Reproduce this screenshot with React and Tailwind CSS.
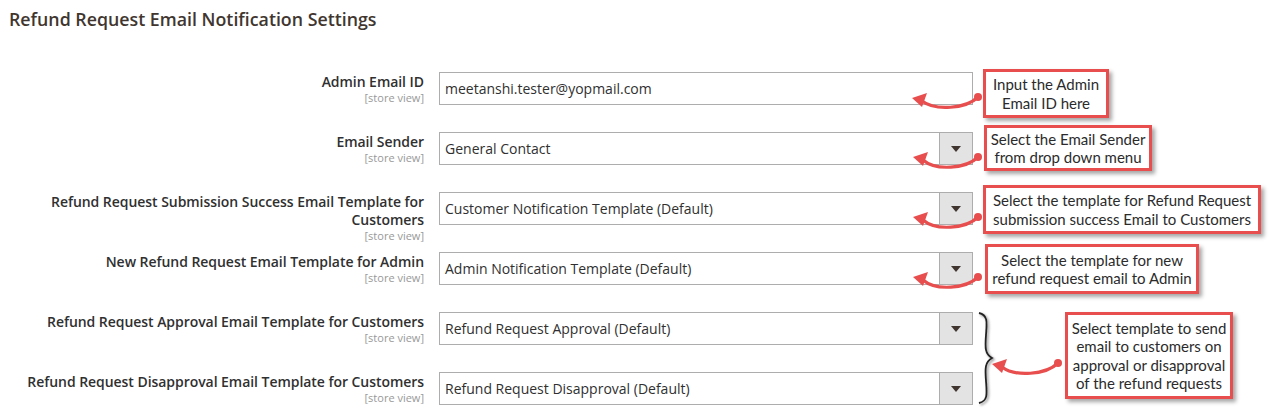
import React from "react";

const rows = [
  { label: ["Admin Email ID"], value: "meetanshi.tester@yopmail.com", select: false },
  { label: ["Email Sender"], value: "General Contact", select: true },
  { label: ["Refund Request Submission Success Email Template for", "Customers"], value: "Customer Notification Template (Default)", select: true },
  { label: ["New Refund Request Email Template for Admin"], value: "Admin Notification Template (Default)", select: true },
  { label: ["Refund Request Approval Email Template for Customers"], value: "Refund Request Approval (Default)", select: true },
  { label: ["Refund Request Disapproval Email Template for Customers"], value: "Refund Request Disapproval (Default)", select: true },
];

function Row({ r }) {
  return (
    <div className="flex h-[60px]">
      <div className="w-[424px] text-right pt-px">
        {r.label.map((l, i) => (
          <div key={i} className="text-[14px] leading-[18px] font-semibold text-[#303030] tracking-[-0.05px]">{l}</div>
        ))}
        <div className="text-[11px] leading-[14px] text-[#999]">[store view]</div>
      </div>
      <div className="ml-[15px] w-[534px] h-[33px] border border-[#adadad] bg-white flex items-center">
        <div className="flex-1 pl-[5px] text-[14px] text-[#303030]">{r.value}</div>
        {r.select && (
          <div className="w-[33px] h-full bg-[#e3e3e3] border-l border-[#adadad] flex items-center justify-center">
            <div className="w-0 h-0 border-l-[5px] border-r-[5px] border-t-[6px] border-l-transparent border-r-transparent border-t-[#41362f]" />
          </div>
        )}
      </div>
    </div>
  );
}

const notes = [
  { cls: "left-[983px] top-[69px] w-[126px] h-[49px]", lines: ["Input the Admin", "Email ID here"] },
  { cls: "left-[984px] top-[125px] w-[168px] h-[46px]", lines: ["Select the Email Sender", "from drop down menu"] },
  { cls: "left-[983px] top-[185px] w-[278px] h-[49px]", lines: ["Select the template for Refund Request", "submission success Email to Customers"] },
  { cls: "left-[985px] top-[244px] w-[214px] h-[50px]", lines: ["Select the template for new", "refund request email to Admin"] },
  { cls: "left-[1065px] top-[312px] w-[168px] h-[87px]", lines: ["Select template to send", "email to customers on", "approval or disapproval", "of the refund requests"] },
];

function Arrow({ x, y, tx, ty }) {
  const mx = (x + tx) / 2;
  return (
    <g>
      <path d={`M${x},${y} C${x - 12},${y + 12} ${mx - 10},${y + 14} ${tx + 10},${ty + 3}`} stroke="#e84e4e" strokeWidth="3.2" fill="none" strokeLinecap="round" />
      <polygon points={`${tx},${ty} ${tx + 15},${ty - 5} ${tx + 10},${ty + 9}`} fill="#e84e4e" />
      <circle cx={x} cy={y} r="4" fill="#e84e4e" />
    </g>
  );
}

export default function App() {
  return (
    <div className="relative w-[1270px] h-[416px] bg-white overflow-hidden" style={{ fontFamily: '"Open Sans", sans-serif' }}>
      <div className="pl-[9px] pt-[7px] text-[17.8px] leading-[24px] font-semibold text-[#41362f]">Refund Request Email Notification Settings</div>
      <div className="mt-[41px]">
        {rows.map((r, i) => (
          <Row key={i} r={r} />
        ))}
      </div>

      <svg className="absolute left-0 top-0" width="1270" height="416" viewBox="0 0 1270 416">
        <defs>
          <filter id="sh" x="-50%" y="-10%" width="200%" height="120%">
            <feDropShadow dx="1.5" dy="1.5" stdDeviation="1.2" floodColor="#000" floodOpacity="0.45" />
          </filter>
        </defs>
        <Arrow x={978} y={97} tx={912} ty={98} />
        <Arrow x={978} y={157} tx={913} ty={157} />
        <Arrow x={978} y={217} tx={913} ty={217} />
        <Arrow x={978} y={277} tx={913} ty={277} />
        <Arrow x={1058} y={363} tx={992} ty={364} />
        <path
          filter="url(#sh)"
          d="M979,313 C988,315 987,322 986,335 C985,348 985,354 992,358 C985,362 985,368 986,381 C987,394 988,401 979,403"
          stroke="#222"
          strokeWidth="1.8"
          fill="none"
        />
      </svg>

      {notes.map((n, i) => (
        <div
          key={i}
          className={`absolute ${n.cls} border-[3px] border-[#e84e4e] bg-white shadow-[3px_3px_4px_rgba(0,0,0,0.35)] flex flex-col items-center justify-center text-[15px] leading-[18.5px] text-[#2b2b2b]`}
          style={{ fontFamily: 'Lato, "Liberation Sans", sans-serif' }}
        >
          {n.lines.map((l, j) => (
            <div key={j} className="whitespace-nowrap">{l}</div>
          ))}
        </div>
      ))}
    </div>
  );
}
